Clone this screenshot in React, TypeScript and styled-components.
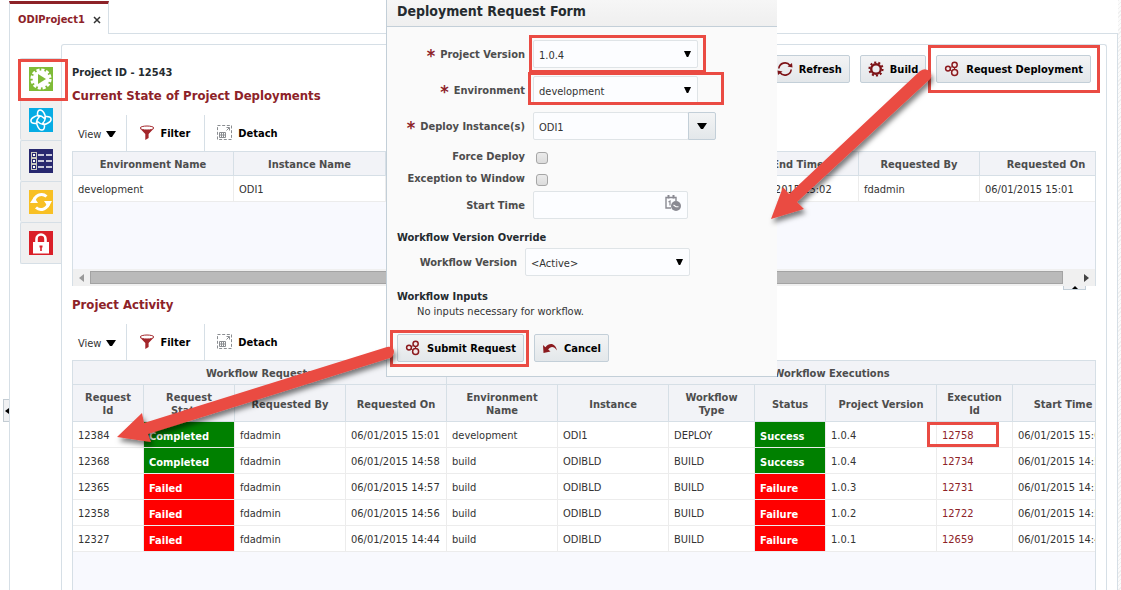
import React from "react";
import styled, { createGlobalStyle, css } from "styled-components";

const GlobalStyle = createGlobalStyle`
  * { box-sizing: border-box; }
  body {
    margin: 0;
    background: #fff;
    color: #333;
    font: 11px/13px "DejaVu Sans Condensed", Tahoma, Verdana, sans-serif;
  }
  button, input, select { font: inherit; color: inherit; margin: 0; }
  h1, h2, h3, p { margin: 0; }
`;

const line = "#d6dfe6";
const maroon = "#8d2228";
const mark = "#ea4b43";

/* ---------- Page frame ---------- */

const Page = styled.div`
  position: relative;
  display: flex;
  min-height: 100vh;
  overflow: hidden;
`;

const Gutter = styled.div`
  flex: 0 0 9px;
  padding: 399px 0 0 3px;
`;

const GutterHandle = styled.button`
  display: flex;
  align-items: center;
  justify-content: center;
  width: 6px;
  height: 23px;
  padding: 0;
  border: 1px solid #c3ccd3;
  border-right: 0;
  background: #f0f1f3;
`;

const Workspace = styled.div`
  flex: 1;
  min-width: 0;
  display: flex;
  flex-direction: column;
`;

const TabStrip = styled.nav`
  display: flex;
  height: 34px;
  padding-top: 1px;
`;

const ProjectTab = styled.div`
  display: flex;
  align-items: center;
  gap: 8px;
  width: 100px;
  padding: 1px 0 0 8px;
  border: 1px solid ${line};
  border-top: 3px solid ${maroon};
  border-bottom: 0;
  color: ${maroon};
  font-weight: bold;
`;

const TabClose = styled.button`
  display: flex;
  padding: 0;
  border: 0;
  background: none;
`;

const TabLine = styled.div`
  flex: 1;
  border-bottom: 1px solid ${line};
`;

const Frame = styled.div`
  flex: 1;
  display: flex;
  padding: 10px 10px 0 10px;
  border: solid ${line};
  border-width: 0 1px;
`;

const EdgeStrip = styled.div`
  flex: 0 0 3px;
  background: repeating-linear-gradient(135deg, #f0f0f0 0 1px, #fbfbfb 1px 3px);
`;

const SideTabs = styled.nav`
  flex: 0 0 41px;
  padding-top: 14px;
`;

const SideTab = styled.button<{ $active?: boolean }>`
  display: flex;
  align-items: center;
  width: 100%;
  height: 41px;
  padding: 0 8px;
  border: 1px solid ${line};
  border-width: 1px 0 0 1px;
  border-radius: 2px 0 0 2px;
  background: ${(p) => (p.$active ? "#fff" : "#f0f0f0")};
  &:last-child { height: 42px; border-bottom-width: 1px; }
`;

const Panel = styled.main`
  flex: 1;
  min-width: 0;
  display: flex;
  flex-direction: column;
  padding: 10px 10px 0;
  border: 1px solid ${line};
  border-bottom: 0;
  border-radius: 3px 3px 0 0;
`;

/* ---------- Headings, buttons, toolbars ---------- */

const PanelTop = styled.header`
  display: flex;
  justify-content: space-between;
  height: 60px;
`;

const Titles = styled.div`
  display: flex;
  flex-direction: column;
  gap: 8px;
  padding-top: 11px;
`;

const ProjectId = styled.h1`
  font-size: 11px;
  line-height: 14px;
  color: #252b2f;
`;

const SectionTitle = styled.h2`
  font-size: 13px;
  line-height: 16px;
  color: ${maroon};
`;

const Actions = styled.div`
  display: flex;
  align-items: flex-start;
  gap: 10px;
  padding-right: 5px;
`;

const Button = styled.button`
  display: flex;
  align-items: center;
  gap: 6px;
  height: 28px;
  padding: 0 7px;
  border: 1px solid #c3cfd8;
  border-radius: 2px;
  background: linear-gradient(#f3f4f5, #e3e7ea);
  color: #000;
  font-weight: bold;
  white-space: nowrap;
`;

const Toolbar = styled.div`
  display: flex;
  height: 36px;
`;

const Tool = styled.button<{ $plain?: boolean }>`
  display: flex;
  align-items: center;
  gap: 5px;
  padding: 0 14px 0 12px;
  border: 0;
  border-left: 1px solid ${line};
  background: none;
  color: #000;
  font-weight: bold;
  ${(p) =>
    p.$plain &&
    css`
      padding: 2px 10px 0 6px;
      border-left: 0;
      font-weight: normal;
      color: #333;
    `}
`;

/* ---------- Data tables ---------- */

const Grid = styled.div<{ $grow?: boolean }>`
  overflow: hidden;
  border: 1px solid ${line};
  border-bottom: 0;
  background: #f8f9fe;
  ${(p) => (p.$grow ? "flex: 1;" : "height: 118px;")}
`;

const Table = styled.table<{ $width: number }>`
  width: ${(p) => p.$width}px;
  table-layout: fixed;
  border-collapse: separate;
  border-spacing: 0;
`;

const Th = styled.th<{ $tall?: boolean }>`
  height: ${(p) => (p.$tall ? 37 : 24)}px;
  padding: 2px 8px 0;
  border: solid ${line};
  border-width: 0 1px 1px 0;
  background: #f2f3f7;
  color: #4d4d4d;
  text-align: center;
`;

const Td = styled.td<{ $tone?: "good" | "bad" }>`
  height: 26px;
  padding: 2px 5px 0;
  border: solid #ececec;
  border-width: 0 1px 1px 0;
  background: #fff;
  white-space: nowrap;
  ${(p) =>
    p.$tone &&
    css`
      padding-top: 4px;
      background: ${p.$tone === "good" ? "#008000" : "#f00"};
      color: #fff;
      font-weight: bold;
    `}
`;

const ExecutionLink = styled.a`
  color: ${maroon};
  text-decoration: none;
`;

const ScrollRow = styled.div`
  display: flex;
  align-items: center;
  height: 17px;
  padding: 0 6px;
  border: solid ${line};
  border-width: 0 1px;
  background: #f0f0f0;
`;

const ScrollThumb = styled.div`
  flex: 1;
  height: 13px;
  margin: 0 21px 0 6px;
  border: 1px solid #a3a3a3;
  background: #bababa;
`;

const Splitter = styled.div`
  display: flex;
  justify-content: flex-end;
  align-items: flex-start;
  height: 11px;
  padding-right: 10px;
`;

const SplitHandle = styled.button`
  display: flex;
  justify-content: center;
  width: 23px;
  height: 4px;
  padding: 0;
  border: 1px solid #c3cfd8;
  border-top: 0;
  background: #f0f1f3;
`;

/* ---------- Request dialog ---------- */

const Dialog = styled.section`
  position: absolute;
  top: 0;
  left: 386px;
  width: 391px;
  border: solid #c3cfd8;
  border-width: 0 0 1px 1px;
  background: #fafafa;
`;

const DialogTitle = styled.h2`
  height: 27px;
  padding: 1px 10px 0;
  border-bottom: 1px solid #c3cfd8;
  background: linear-gradient(#f6f6f6, #efefef);
  color: #252b2f;
  font-size: 14px;
  line-height: 20px;
`;

const DialogBody = styled.form`
  padding: 13px 10px 14px;
`;

const Field = styled.div<{ $after?: number; $check?: boolean; $label?: number }>`
  display: grid;
  grid-template-columns: ${(p) => p.$label ?? 128}px auto;
  justify-content: start;
  align-items: center;
  gap: 8px;
  height: ${(p) => (p.$check ? 22 : 28)}px;
  margin-bottom: ${(p) => p.$after ?? 8}px;
`;

const Label = styled.label`
  display: flex;
  justify-content: flex-end;
  gap: 5px;
  color: #4d4d4d;
  font-weight: bold;
  white-space: nowrap;
`;

const Star = styled.span`
  height: 13px;
  color: ${maroon};
  font-size: 18px;
  line-height: 16px;
`;

const Control = styled.div<{ $width: number }>`
  position: relative;
  display: flex;
  width: ${(p) => p.$width}px;
`;

const controlBox = css`
  width: 100%;
  height: 28px;
  padding: 2px 5px 0;
  border: 1px solid #dfe4e7;
  border-radius: 2px;
  background: #fcfdff;
`;

const Select = styled.select`
  ${controlBox}
  appearance: none;
`;

const TextBox = styled.input`
  ${controlBox}
`;

const SelectArrow = styled.span`
  position: absolute;
  top: 11px;
  right: 7px;
  display: flex;
  pointer-events: none;
`;

const DropButton = styled.button`
  flex: 0 0 28px;
  display: flex;
  align-items: center;
  justify-content: center;
  margin-left: -1px;
  padding: 0;
  border: 1px solid #c3cfd8;
  border-radius: 0 2px 2px 0;
  background: linear-gradient(#f3f4f5, #e3e7ea);
`;

const DateButton = styled.button`
  position: absolute;
  top: 3px;
  right: 6px;
  display: flex;
  padding: 0;
  border: 0;
  background: none;
`;

const CheckBox = styled.input`
  appearance: none;
  width: 12px;
  height: 12px;
  margin: 4px 0 0 3px;
  border: 1px solid #a6a6a6;
  border-radius: 3px;
  background: linear-gradient(#ebebeb, #dcdcdc);
`;

const GroupTitle = styled.h3<{ $after: number }>`
  margin-bottom: ${(p) => p.$after}px;
  color: #252b2f;
  font-size: 11px;
  line-height: 14px;
`;

const Note = styled.p`
  padding-left: 20px;
  line-height: 16px;
`;

const DialogActions = styled.div`
  display: flex;
  gap: 10px;
  margin-top: 14px;
`;

const Annotations = styled.svg`
  position: absolute;
  top: 0;
  left: 0;
  overflow: visible;
  pointer-events: none;
`;

/* ---------- Icons ---------- */

const Down = ({ w = 10, h = 6 }: { w?: number; h?: number }) => (
  <svg width={w} height={h} viewBox="0 0 10 7" preserveAspectRatio="none">
    <path d="M0 0H10L6 7H4Z" fill="#000" />
  </svg>
);

const FilterIcon = () => (
  <svg width="16" height="16" viewBox="0 0 16 16">
    <path d="M1 3.5L6.3 9V15L9.6 13V9L14.8 3.5C12 5.6 4 5.6 1 3.5Z" fill="#a3262b" />
    <ellipse cx="8" cy="3" rx="6.8" ry="2" fill="#fff" stroke="#a3262b" />
  </svg>
);

const DetachIcon = () => (
  <svg width="16" height="16" viewBox="0 0 16 16" fill="none" stroke="#8a8d91">
    <rect x=".5" y=".5" width="14" height="14" strokeDasharray="3 1.67" />
    <path d="M2.5 7.5H8.5V12.5H2.5ZM2.5 10H8.5M4.5 7.5V12.5M6.5 7.5V12.5M9.5 5.5L12 3M9.5 2.5H12.5V5.5" />
  </svg>
);

const RefreshIcon = () => (
  <svg width="16" height="16" viewBox="0 0 16 16">
    <path d="M1.8 7.5A6.2 6.2 0 0 1 13 4.500M14.2 8.500A6.200 6.200 0 0 1 3 11.500" fill="none" stroke="#7d1418" strokeWidth="1.6" />
    <path d="M10.5 5.500L15.500 6.600L15 2ZM5.500 10.500L.5 9.400L1 14Z" fill="#7d1418" />
  </svg>
);

const GearIcon = () => (
  <svg width="16" height="16" viewBox="0 0 16 16" fill="none" stroke="#7d1418">
    <circle cx="8" cy="8" r="6.6" strokeWidth="2" strokeDasharray="2.1 2.05" />
    <circle cx="8" cy="8" r="4.8" strokeWidth="2.4" />
  </svg>
);

const CirclesIcon = () => (
  <svg width="16" height="16" viewBox="0 0 16 16" fill="#f4e9e9" stroke="#8b1a1e" strokeWidth="1.5">
    <path d="M5 8L10 4M5 8L10 12M10.5 4V12" strokeWidth="1" fill="none" />
    <circle cx="4" cy="7.6" r="2.4" />
    <circle cx="10.6" cy="3.8" r="2.6" />
    <circle cx="10.6" cy="11.6" r="3" />
  </svg>
);

const UndoIcon = () => (
  <svg width="16" height="16" viewBox="0 0 16 16">
    <path d="M1 5L1.500 13L8.500 11.500L6.200 9.600C8.500 6 12 6 15 10.500C13.500 3 7.500 2 3.400 7.200Z" fill="#8b1a1e" />
  </svg>
);

const CalendarIcon = () => (
  <svg width="18" height="18" viewBox="0 0 18 18">
    <path d="M7 14H2V3.500H12V7" fill="none" stroke="#8a8a92" strokeWidth="1.400" />
    <path d="M4.500 1V4.500M9.500 1V4.500" fill="none" stroke="#8a8a92" strokeWidth="2" />
    <path d="M4.500 8L6 7V11.500" fill="none" stroke="#8a8a92" strokeWidth="1.200" />
    <circle cx="12" cy="12" r="5" fill="#8a8a92" />
    <path d="M9.500 11L12 12.800H14.500" fill="none" stroke="#fff" strokeWidth="1.100" />
  </svg>
);

const GearPlay = () => (
  <svg width="24" height="24" viewBox="0 0 24 24">
    <rect width="24" height="24" fill="#7fbb37" />
    <circle cx="12" cy="12" r="9.2" fill="none" stroke="#fff" strokeWidth="2.8" strokeDasharray="3.1 1.717" />
    <circle cx="12" cy="12" r="8.4" fill="#fff" />
    <path d="M9 7L17 12L9 17Z" fill="#7fbb37" />
  </svg>
);

const Knot = () => (
  <svg width="24" height="24" viewBox="0 0 24 24" fill="none" stroke="#fff" strokeWidth="1.500">
    <rect width="24" height="24" fill="#06ace4" stroke="none" />
    <path d="M7.500 15.500C0 16 1 11 5 9C9 6.500 13 8 15.500 10.500M8.500 7.500C8 0 13 1 15 5C17.500 9 16 13 13.500 15.500M16.500 8.500C24 8 23 13 19 15C15 17.500 11 16 8.500 13.500M15.500 16.500C16 24 11 23 9 19C6.500 15 8 11 10.500 8.500" />
    <path d="M8.500 7.500L10.500 8.500M16.500 8.500L15.500 10.500M15.500 16.500L13.500 15.500M7.500 15.500L8.500 13.500" />
  </svg>
);

const ListIcon = () => (
  <svg width="24" height="24" viewBox="0 0 24 24" fill="none">
    <rect width="24" height="24" fill="#28286f" />
    <g stroke="#c9c8c0">
      <rect x="2.500" y="3.500" width="5" height="5" />
      <rect x="2.500" y="9.500" width="5" height="5" />
      <rect x="2.500" y="15.500" width="5" height="5" />
    </g>
    <path d="M4 6H6M4 12H6M4 18H6" stroke="#fff" strokeWidth="2" />
    <path d="M9 6H15M17 6H23M9 12H15M17 12H23M9 18H15M17 18H23" stroke="#fff" strokeWidth="1.600" />
  </svg>
);

const SyncIcon = () => (
  <svg width="24" height="24" viewBox="0 0 24 24">
    <rect width="24" height="24" fill="#f8c024" />
    <path d="M5 12A7.500 7.500 0 0 1 17.500 6.500M19.500 12A7.500 7.500 0 0 1 7 17.500" fill="none" stroke="#fff" strokeWidth="3" />
    <path d="M1 13L5 7L9 13ZM15 11H23L19.500 17.500Z" fill="#fff" />
  </svg>
);

const LockIcon = () => (
  <svg width="24" height="24" viewBox="0 0 24 24">
    <rect width="24" height="24" fill="#da1f28" />
    <path d="M7.500 11V8A4.500 4.500 0 0 1 16.500 8V11" fill="none" stroke="#fff" strokeWidth="2.600" />
    <rect x="4" y="11" width="16" height="11.500" fill="#fff" />
    <path d="M10.500 14.500H13.500V16.500H12.800V20H11.200V16.500H10.500Z" fill="#da1f28" />
  </svg>
);

/* ---------- Data ---------- */

const deploymentCols = [161, 152, 352, 121, 121, 133];
const activityCols = [71, 91, 111, 101, 111, 111, 86, 71, 111, 76, 101, 103];
const activityHeads = [
  "Request Id", "Request Status", "Requested By", "Requested On", "Environment Name", "Instance",
  "Workflow Type", "Status", "Project Version", "Execution Id", "Start Time", "",
];

const activity = [
  { id: "12384", state: "Completed", on: "06/01/2015 15:01", env: "development", inst: "ODI1", type: "DEPLOY", status: "Success", version: "1.0.4", exec: "12758", start: "06/01/2015 15:01" },
  { id: "12368", state: "Completed", on: "06/01/2015 14:58", env: "build", inst: "ODIBLD", type: "BUILD", status: "Success", version: "1.0.4", exec: "12734", start: "06/01/2015 14:58" },
  { id: "12365", state: "Failed", on: "06/01/2015 14:57", env: "build", inst: "ODIBLD", type: "BUILD", status: "Failure", version: "1.0.3", exec: "12731", start: "06/01/2015 14:57" },
  { id: "12358", state: "Failed", on: "06/01/2015 14:56", env: "build", inst: "ODIBLD", type: "BUILD", status: "Failure", version: "1.0.2", exec: "12722", start: "06/01/2015 14:56" },
  { id: "12327", state: "Failed", on: "06/01/2015 14:44", env: "build", inst: "ODIBLD", type: "BUILD", status: "Failure", version: "1.0.1", exec: "12659", start: "06/01/2015 14:44" },
];

const sum = (n: number[]) => n.reduce((a, b) => a + b, 0);

const Columns = ({ widths }: { widths: number[] }) => (
  <colgroup>
    {widths.map((w, i) => (
      <col key={i} style={{ width: w }} />
    ))}
  </colgroup>
);

const TableTools = () => (
  <Toolbar>
    <Tool $plain>View <Down /></Tool>
    <Tool><FilterIcon />Filter</Tool>
    <Tool><DetachIcon />Detach</Tool>
  </Toolbar>
);

const RequestDialog = () => (
  <Dialog role="dialog" aria-labelledby="dialog-title">
    <DialogTitle id="dialog-title">Deployment Request Form</DialogTitle>
    <DialogBody onSubmit={(e) => e.preventDefault()}>
      <Field>
        <Label htmlFor="version"><Star>*</Star>Project Version</Label>
        <Control $width={165}>
          <Select id="version"><option>1.0.4</option></Select>
          <SelectArrow><Down w={7} h={6} /></SelectArrow>
        </Control>
      </Field>
      <Field>
        <Label htmlFor="environment"><Star>*</Star>Environment</Label>
        <Control $width={165}>
          <Select id="environment"><option>development</option></Select>
          <SelectArrow><Down w={7} h={6} /></SelectArrow>
        </Control>
      </Field>
      <Field $after={5}>
        <Label htmlFor="instances"><Star>*</Star>Deploy Instance(s)</Label>
        <Control $width={183}>
          <TextBox id="instances" defaultValue="ODI1" />
          <DropButton type="button" aria-label="Choose instances"><Down /></DropButton>
        </Control>
      </Field>
      <Field $check $after={0}>
        <Label htmlFor="force">Force Deploy</Label>
        <CheckBox id="force" type="checkbox" />
      </Field>
      <Field $check $after={2}>
        <Label htmlFor="exception">Exception to Window</Label>
        <CheckBox id="exception" type="checkbox" />
      </Field>
      <Field $after={12}>
        <Label htmlFor="start">Start Time</Label>
        <Control $width={155}>
          <TextBox id="start" />
          <DateButton type="button" aria-label="Choose date"><CalendarIcon /></DateButton>
        </Control>
      </Field>
      <GroupTitle $after={3}>Workflow Version Override</GroupTitle>
      <Field $label={120} $after={14}>
        <Label htmlFor="workflow">Workflow Version</Label>
        <Control $width={165}>
          <Select id="workflow"><option>&lt;Active&gt;</option></Select>
          <SelectArrow><Down w={7} h={6} /></SelectArrow>
        </Control>
      </Field>
      <GroupTitle $after={0}>Workflow Inputs</GroupTitle>
      <Note>No inputs necessary for workflow.</Note>
      <DialogActions>
        <Button type="submit"><CirclesIcon />Submit Request</Button>
        <Button type="button"><UndoIcon />Cancel</Button>
      </DialogActions>
    </DialogBody>
  </Dialog>
);

const marks = [
  [18, 59, 50, 42],
  [529, 35, 177, 38],
  [528, 72, 196, 33],
  [928, 45, 172, 48],
  [390, 330, 139, 37],
  [927, 422, 72, 25],
];

export default function App() {
  return (
    <Page>
      <GlobalStyle />
      <Gutter>
        <GutterHandle aria-label="Expand pane">
          <svg width="4" height="6"><path d="M4 0V6L0 3Z" /></svg>
        </GutterHandle>
      </Gutter>
      <Workspace>
        <TabStrip>
          <ProjectTab>
            ODIProject1
            <TabClose aria-label="Close tab">
              <svg width="8" height="8"><path d="M1 1L7 7M7 1L1 7" stroke="#333" strokeWidth="1.500" /></svg>
            </TabClose>
          </ProjectTab>
          <TabLine />
        </TabStrip>
        <Frame>
          <SideTabs>
            <SideTab $active aria-label="Deployments"><GearPlay /></SideTab>
            <SideTab aria-label="Workflows"><Knot /></SideTab>
            <SideTab aria-label="Details"><ListIcon /></SideTab>
            <SideTab aria-label="Synchronize"><SyncIcon /></SideTab>
            <SideTab aria-label="Security"><LockIcon /></SideTab>
          </SideTabs>
          <Panel>
            <PanelTop>
              <Titles>
                <ProjectId>Project ID - 12543</ProjectId>
                <SectionTitle>Current State of Project Deployments</SectionTitle>
              </Titles>
              <Actions>
                <Button><RefreshIcon />Refresh</Button>
                <Button><GearIcon />Build</Button>
                <Button><CirclesIcon />Request Deployment</Button>
              </Actions>
            </PanelTop>
            <TableTools />
            <Grid>
              <Table $width={sum(deploymentCols)}>
                <Columns widths={deploymentCols} />
                <thead>
                  <tr>
                    <Th>Environment Name</Th><Th>Instance Name</Th><Th /><Th>End Time</Th>
                    <Th>Requested By</Th><Th>Requested On</Th>
                  </tr>
                </thead>
                <tbody>
                  <tr>
                    <Td>development</Td><Td>ODI1</Td><Td /><Td>06/01/2015 15:02</Td>
                    <Td>fdadmin</Td><Td>06/01/2015 15:01</Td>
                  </tr>
                </tbody>
              </Table>
            </Grid>
            <ScrollRow>
              <svg width="5" height="8"><path d="M5 0V8L0 4Z" fill="#999" /></svg>
              <ScrollThumb />
              <svg width="5" height="8"><path d="M0 0V8L5 4Z" fill="#444" /></svg>
            </ScrollRow>
            <Splitter>
              <SplitHandle aria-label="Collapse pane">
                <svg width="6" height="3"><path d="M0 3H6L3 0Z" /></svg>
              </SplitHandle>
            </Splitter>
            <SectionTitle>Project Activity</SectionTitle>
            <Splitter />
            <TableTools />
            <Grid $grow>
              <Table $width={sum(activityCols)}>
                <Columns widths={activityCols} />
                <thead>
                  <tr>
                    <Th colSpan={4}>Workflow Requests</Th>
                    <Th colSpan={8}>Workflow Executions</Th>
                  </tr>
                  <tr>
                    {activityHeads.map((h, i) => <Th key={i} $tall>{h}</Th>)}
                  </tr>
                </thead>
                <tbody>
                  {activity.map((r) => (
                    <tr key={r.id}>
                      <Td>{r.id}</Td>
                      <Td $tone={r.state === "Completed" ? "good" : "bad"}>{r.state}</Td>
                      <Td>fdadmin</Td>
                      <Td>{r.on}</Td>
                      <Td>{r.env}</Td>
                      <Td>{r.inst}</Td>
                      <Td>{r.type}</Td>
                      <Td $tone={r.status === "Success" ? "good" : "bad"}>{r.status}</Td>
                      <Td>{r.version}</Td>
                      <Td><ExecutionLink href="#">{r.exec}</ExecutionLink></Td>
                      <Td>{r.start}</Td>
                      <Td />
                    </tr>
                  ))}
                </tbody>
              </Table>
            </Grid>
          </Panel>
        </Frame>
      </Workspace>
      <EdgeStrip />
      <RequestDialog />
      <Annotations width="1100" height="450" aria-hidden="true">
        <defs>
          <filter id="shadow" x="-20%" y="-20%" width="140%" height="150%">
            <feDropShadow dx="2" dy="4" stdDeviation="2.500" floodOpacity=".5" />
          </filter>
        </defs>
        {marks.map(([x, y, w, h]) => (
          <rect key={`${x}-${y}`} x={x + 1.5} y={y + 1.5} width={w - 3} height={h - 3} fill="none" stroke={mark} strokeWidth="3" />
        ))}
        <g fill={mark} filter="url(#shadow)">
          <path d="M771 219L783 187L789 194L920 71Q926 67 930 72Q933 76 929 80L797 202L804 209Z" />
          <path d="M117 437L142 413L144 423L387 347Q393 346 394 351Q394 356 390 358L148 434L151 442Z" />
        </g>
      </Annotations>
    </Page>
  );
}
